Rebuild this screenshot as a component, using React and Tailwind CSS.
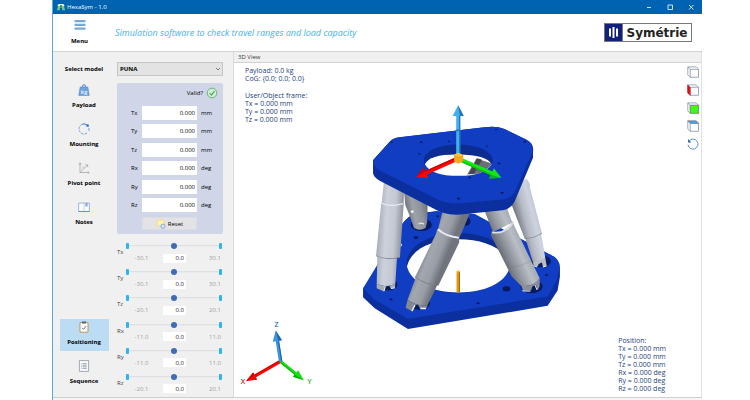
import React, { useState } from 'react';

const FIELDS = [
    { name: 'Tx', unit: 'mm', limit: '30.1' },
    { name: 'Ty', unit: 'mm', limit: '30.1' },
    { name: 'Tz', unit: 'mm', limit: '20.1' },
    { name: 'Rx', unit: 'deg', limit: '11.0' },
    { name: 'Ry', unit: 'deg', limit: '11.0' },
    { name: 'Rz', unit: 'deg', limit: '20.1' },
];

function WeightIcon() {
    return (
        <svg viewBox="0 0 12 12" className="h-3 w-3">
            <circle cx="6" cy="2.2" r="1.5" fill="none" stroke="#5583bd" />
            <path d="M2.2 3h7.6l1.4 8.4H.8z" fill="#6fa3dc" stroke="#5583bd" strokeWidth=".6" />
            <text x="6" y="9.6" fontSize="5.5" textAnchor="middle" fill="#d9ecff" fontFamily="Open Sans, sans-serif">kg</text>
        </svg>
    );
}

function MountingIcon() {
    return (
        <svg viewBox="0 0 12 12" className="h-3 w-3" fill="none" stroke="#5f8fce">
            <path d="M10.6 4A5 5 0 1 0 9 10" strokeDasharray="2.6 1" strokeWidth=".8" />
            <path d="M4 1.2a5 5 0 0 1 5 .8" />
            <path d="M8.3 1.3h2.4v2.4H8.3z" fill="#3f74c0" stroke="none" />
            <path d="M11 5v3" strokeWidth=".8" />
        </svg>
    );
}

function PivotIcon() {
    return (
        <svg viewBox="0 0 12 12" className="h-3 w-3" fill="none" stroke="#a3a7ad" strokeWidth=".8">
            <path d="M2 1v9.5h9M2 10.5 9.5 3" />
            <path d="M.8 2.5 2 .8l1.2 1.7M7.3 2.8h2.4v2.4M9.7 9.3l1.5 1.2-1.5 1.2" />
            <path d="M4.4 6.2 6 4.6" stroke="#7fa3d4" />
        </svg>
    );
}

function NotesIcon() {
    return (
        <svg viewBox="0 0 12 12" className="h-3 w-3">
            <path d="M.6 2h10.8v8.5H.6z" fill="#f6f9fd" stroke="#8ba9d2" strokeWidth=".8" />
            <path d="M7.5 2h2v4l-1-.9-1 .9z" fill="#7f9fcc" />
            <path d="M6 2v8.5" stroke="#a9bddb" strokeWidth=".6" />
            <path d="M.6 10.5h10.8" stroke="#6c8fc4" />
        </svg>
    );
}

function ClipboardIcon() {
    return (
        <svg viewBox="0 0 12 12" className="h-3 w-3">
            <path d="M2 1.6h8v9.6H2z" fill="#fff" stroke="#b78a4c" strokeWidth=".9" />
            <path d="M4 .5h4v2H4z" fill="#58626e" />
            <path d="m4 6.8 1.5 1.6L8.2 5" fill="none" stroke="#5a6672" strokeWidth=".9" />
        </svg>
    );
}

function SequenceIcon() {
    return (
        <svg viewBox="0 0 12 12" className="h-3 w-3">
            <path d="M1.4.6h9.2v10.8H1.4z" fill="#fbfbfc" stroke="#8b95a3" strokeWidth=".8" />
            <path d="M4.6 3.6h4M4.6 5.2h4M4.6 6.8h4M4.6 8.4h4" stroke="#8d9bb0" strokeWidth=".9" />
            <path d="M3 3.6h.9M3 5.2h.9M3 6.8h.9M3 8.4h.9" stroke="#a8b4c6" strokeWidth=".9" />
        </svg>
    );
}

function CubeIcon({ face }) {
    return (
        <svg viewBox="0 0 12 12" className="h-3 w-3" stroke="#74859f" strokeWidth=".7" strokeLinejoin="round">
            <path d="M.8.9h8.4l2.3 2.4v8H3.2L.8 8.9z" fill="#fff" />
            {face === 'left' && <path d="M.8.9 3.2 3.3v8L.8 8.9z" fill="#f00" stroke="#d00" />}
            {face === 'front' && <path d="M3.2 3.3h8.3v8H3.2z" fill="#3dff00" />}
            {face === 'top' && <path d="M.8.9h8.4l2.3 2.4H3.2z" fill="#3fa9f0" />}
            <path d="M3.2 3.3h8.3M3.2 3.3v8M.8.9l2.4 2.4" fill="none" />
        </svg>
    );
}

function RotateIcon() {
    return (
        <svg viewBox="0 0 12 12" className="h-3 w-3" fill="none" stroke="#4f82c4" strokeWidth=".9">
            <path d="M2.3 2.7A5 5 0 1 1 1 6.8" />
            <path d="M1 1v3.4h3.4z" fill="#2f66b0" stroke="none" />
        </svg>
    );
}

const TOP_ITEMS = [
    { label: 'Payload', Icon: WeightIcon },
    { label: 'Mounting', Icon: MountingIcon },
    { label: 'Pivot point', Icon: PivotIcon },
    { label: 'Notes', Icon: NotesIcon },
];

const BOTTOM_ITEMS = [
    { label: 'Positioning', Icon: ClipboardIcon, active: true },
    { label: 'Sequence', Icon: SequenceIcon },
];

function NavItem({ label, Icon, active }) {
    return (
        <button
            className={`flex w-[49px] flex-col items-center gap-1 pt-[2px] pb-1 text-[6px] leading-[10px] font-bold whitespace-nowrap ${active ? 'bg-[#bcdcf4]' : ''}`}
        >
            <Icon />
            <span>{label}</span>
        </button>
    );
}

function TitleBar() {
    return (
        <div className="flex h-[14px] items-center bg-[#0063b1] pl-1 text-white">
            <svg viewBox="0 0 8 8" className="h-2 w-2">
                <path d="M1.5 1h5l1.2 2H.3z" fill="#e8f5e4" />
                <path d="M1 3 0 7.2h2.6L3 4.5h2l.4 2.7H8L7 3z" fill="#7fd06c" />
                <path d="M3 2.2h2v1.5H3z" fill="#2c70a8" />
            </svg>
            <span className="ml-[2px] text-[6px] leading-[10px]">HexaSym - 1.0</span>
            <div className="ml-auto flex gap-[11px] pr-[6px]">
                <button aria-label="Minimize" className="h-[10px] w-[10px]">
                    <svg viewBox="0 0 10 10" stroke="#fff" strokeWidth=".8"><path d="M3 5.5h4" /></svg>
                </button>
                <button aria-label="Maximize" className="h-[10px] w-[10px]">
                    <svg viewBox="0 0 10 10" fill="none" stroke="#fff" strokeWidth=".8"><path d="M3 3h4.5v4.5H3z" /></svg>
                </button>
                <button aria-label="Close" className="h-[10px] w-[10px]">
                    <svg viewBox="0 0 10 10" stroke="#fff" strokeWidth=".8"><path d="m3 3 4.5 4.5M7.5 3 3 7.5" /></svg>
                </button>
            </div>
        </div>
    );
}

function Header() {
    return (
        <header className="flex h-[38px] items-center border-b border-[#d4d4d4] bg-white">
            <button className="flex w-[53px] flex-col items-center gap-[6px] text-[6px] leading-[10px] font-bold">
                <svg viewBox="0 0 12 10" className="h-[10px] w-3" fill="#7ba7d9">
                    <path d="M.5 0h11v2.2H.5zM.5 3.8h11V6H.5zM.5 7.6h11v2.2H.5z" />
                </svg>
                <span>Menu</span>
            </button>
            <p className="ml-[9px] text-[9px] leading-3 whitespace-nowrap text-[#3fb3e6] italic">
                Simulation software to check travel ranges and load capacity
            </p>
            <div className="mr-[10px] ml-auto flex h-[19px] w-[88px] items-stretch border border-[#777] bg-white">
                <div className="w-[17px] bg-[#10207c]">
                    <svg viewBox="0 0 17 17" fill="#fff">
                        <path d="M4 4.5h2v8H4zM7.5 3h2v11h-2zM11 4.5h2v8h-2z" />
                    </svg>
                </div>
                <div className="flex flex-1 items-center justify-center border-l border-[#777] font-['DejaVu_Sans'] text-[12px] leading-4 font-bold text-[#222]">
                    Symétrie
                </div>
            </div>
        </header>
    );
}

function ValuesPanel() {
    return (
        <section className="mt-[7px] h-[151px] rounded-[2px] bg-[#d0d5e8] pt-1 pl-[11px]">
            <div className="flex items-center justify-end gap-[3px] pr-[5px]">
                <span>Valid?</span>
                <svg viewBox="0 0 12 12" className="h-3 w-3" fill="none" stroke="#54a866">
                    <circle cx="6" cy="6" r="4.8" fill="#d2efd2" strokeWidth=".8" />
                    <path d="m3.6 6.2 1.8 1.8 3.2-3.8" strokeWidth="1.2" />
                </svg>
            </div>
            <div className="mt-[7px] grid h-[106px] content-between">
                {FIELDS.map((f) => (
                    <label key={f.name} className="grid grid-cols-[14px_55px_1fr] items-center">
                        <span className="pl-[3px]">{f.name}</span>
                        <input defaultValue="0.000" className="h-[14px] min-w-0 bg-white px-[2px] text-right" />
                        <span className="pl-1">{f.unit}</span>
                    </label>
                ))}
            </div>
            <button className="mt-[5px] ml-[14px] flex h-[13px] w-[55px] items-center justify-center gap-[2px] border border-[#dcdde2] bg-[#e3e3e6]">
                <svg viewBox="0 0 10 10" className="h-[10px] w-[10px]">
                    <path d="M1 1h7v6H1z" fill="#fdf3b0" stroke="#e2cf79" strokeWidth=".5" />
                    <circle cx="7" cy="7.2" r="2.1" fill="#dce9f7" stroke="#5d8fcb" strokeWidth=".7" />
                </svg>
                Reset
            </button>
        </section>
    );
}

function AxisSlider({ name, limit }) {
    const [value, setValue] = useState(0);
    return (
        <div className="grid h-6 grid-cols-[9px_minmax(0,1fr)] items-center text-[#444]">
            <span>{name}</span>
            <div>
                <div className="flex h-[10px] items-center pr-[1px]">
                    <span className="h-[6px] w-[3px] rounded-[1px] bg-[#2fb4f2]" />
                    <input
                        type="range"
                        aria-label={name}
                        min={-Number(limit)}
                        max={limit}
                        step="0.1"
                        value={value}
                        onChange={(e) => setValue(Number(e.target.value))}
                        className="h-[6px] min-w-0 flex-1 appearance-none bg-linear-to-b from-transparent from-35% via-[#d9dbde] via-35% to-transparent to-65% [&::-webkit-slider-thumb]:h-[6px] [&::-webkit-slider-thumb]:w-[6px] [&::-webkit-slider-thumb]:appearance-none [&::-webkit-slider-thumb]:rounded-full [&::-webkit-slider-thumb]:bg-[#3f6cb5]"
                    />
                    <span className="h-[6px] w-[3px] rounded-[1px] bg-[#2fb4f2]" />
                </div>
                <div className="mt-[2px] grid grid-cols-3 items-center text-[#a0a0a0]">
                    <span className="pr-[10px] text-right whitespace-nowrap">-{limit}</span>
                    <input
                        aria-label={`${name} value`}
                        value={value.toFixed(1)}
                        onChange={(e) => setValue(Number(e.target.value) || 0)}
                        className="mx-auto h-[9px] w-[23px] bg-white pr-[2px] text-right text-[#222]"
                    />
                    <span className="pr-[2px] text-right">{limit}</span>
                </div>
            </div>
        </div>
    );
}

function Sidebar() {
    return (
        <aside className="flex w-[181px] shrink-0 border-r border-[#dcdcdc] bg-[#f0f0f0]">
            <nav className="flex w-16 shrink-0 flex-col items-center gap-[7px] pt-[10px] pr-[2px] pb-[7px]">
                <label htmlFor="model" className="mb-[-1px] text-[6px] leading-[14px] font-bold whitespace-nowrap">Select model</label>
                {TOP_ITEMS.map((item) => <NavItem key={item.label} {...item} />)}
                <div className="mt-auto flex flex-col gap-[7px]">
                    {BOTTOM_ITEMS.map((item) => <NavItem key={item.label} {...item} />)}
                </div>
            </nav>
            <div className="flex min-w-0 flex-1 flex-col pt-[10px] pr-[10px] text-[6px] leading-[10px]">
                <div className="relative">
                    <select id="model" className="block h-[14px] w-full appearance-none border border-[#c6c6c6] bg-[#e3e3e3] pl-[2px] font-bold">
                        <option>PUNA</option>
                    </select>
                    <svg viewBox="0 0 6 6" className="pointer-events-none absolute top-1 right-[2px] h-[6px] w-[6px]" fill="none" stroke="#555" strokeWidth=".7">
                        <path d="m1 2 2 2 2-2" />
                    </svg>
                </div>
                <ValuesPanel />
                <div className="mt-[6px] mb-[2px] flex flex-1 flex-col justify-between">
                    {FIELDS.map((f) => <AxisSlider key={f.name} {...f} />)}
                </div>
            </div>
        </aside>
    );
}

function Arrow({ x, y, angle, length, color, dark, width = 10 }) {
    return (
        <g transform={`translate(${x} ${y}) rotate(${angle})`}>
            <path d={`M0 ${-width / 2}H${length - 28}v${width}H0z`} fill={color} />
            <path d={`M0 ${width / 5}H${length - 28}v${width / 3}H0z`} fill={dark} />
            <path d={`M${length - 32} ${-width * 1.4} ${length} 0l${-32} ${width * 1.4}z`} fill={color} />
            <path d={`M${length - 32} ${width * 0.4} ${length} 0l${-32} ${width * 1.4}z`} fill={dark} />
        </g>
    );
}

const LEG_SHADES = {
    legA: { line: [66, 420, 142, 424], stops: ['#a3a8b2', '#ccd2dc', '#c3c8d2', '#8f939d'] },
    legB: { line: [152, 356, 218, 343], stops: ['#6c7078', '#9da1a9', '#8f939b', '#6b6f77'] },
    legC: { line: [200, 486, 270, 514], stops: ['#787c84', '#a3a7af', '#999da5', '#70747c'] },
    legD: { line: [445, 506, 515, 474], stops: ['#6b6f77', '#9599a2', '#b9bdc6', '#a5a9b2'] },
    legE: { line: [492, 409, 562, 391], stops: ['#777b84', '#b4b9c4', '#ced4df', '#bcc1cc'] },
};

function Hexapod() {
    return (
        <svg viewBox="234 63 468 334" className="h-full w-full" role="img" aria-label="Hexapod">
            <defs>
                {Object.entries(LEG_SHADES).map(([id, { line, stops }]) => (
                    <linearGradient key={id} id={id} gradientUnits="userSpaceOnUse" x1={line[0]} y1={line[1]} x2={line[2]} y2={line[3]}>
                        <stop offset="0" stopColor={stops[0]} />
                        <stop offset=".35" stopColor={stops[1]} />
                        <stop offset=".7" stopColor={stops[2]} />
                        <stop offset="1" stopColor={stops[3]} />
                    </linearGradient>
                ))}
            </defs>

            {/* drawn at three times the screen size */}
            <g transform="translate(355 90) scale(.3333)">
                {/* base plate */}
                <path d="M25 595 60 565 135 415Q150 385 180 372L245 364 360 372 585 493Q618 506 617 536V560L610 602 580 648 160 718 60 655 25 622z" fill="#0b2f9f" />
                <path d="M25 595 135 415Q150 385 180 372L245 364 360 372 585 493Q618 506 615 536L606 575 580 620 160 687 60 630z" fill="#113dc2" />
                <ellipse cx="312" cy="519" rx="156" ry="90" fill="#0b2c90" />
                <path d="M157 530C170 475 235 448 312 448S455 475 467 530C455 580 390 608 312 608S170 580 157 530z" fill="#fff" />
                <g fill="#071b63">
                    <ellipse cx="100" cy="584" rx="28" ry="18" />
                    <ellipse cx="194" cy="640" rx="32" ry="20" />
                    <ellipse cx="200" cy="404" rx="32" ry="19" />
                    <ellipse cx="532" cy="590" rx="33" ry="20" />
                    <ellipse cx="560" cy="514" rx="30" ry="18" />
                    <ellipse cx="333" cy="394" rx="15" ry="13" />
                    <ellipse cx="456" cy="597" rx="12" ry="8" />
                    <ellipse cx="184" cy="443" rx="7" ry="4" />
                    <ellipse cx="249" cy="379" rx="4" ry="3" />
                    <ellipse cx="109" cy="629" rx="5" ry="3" />
                    <ellipse cx="371" cy="640" rx="5" ry="3" />
                    <ellipse cx="577" cy="555" rx="5" ry="3" />
                </g>
                <path d="M306 545h10v63h-10z" fill="#e39a12" />
                <path d="M313 545h3v63h-3z" fill="#9c6205" />
                <ellipse cx="311" cy="545" rx="5" ry="3" fill="#f7bb2b" />

                {/* legs behind */}
                <path d="M147 290H213L219 345 218 395 213 414Q195 424 178 414L168 385 152 345z" fill="url(#legB)" />
                <circle cx="173" cy="365" r="4" fill="#f4f5f8" />
                <path d="M192 402Q201 396 208 403" fill="none" stroke="#e6e8ed" strokeWidth="4" />
                <path d="M138 460l3 5-3 5" fill="none" stroke="#e8eaf0" strokeWidth="3" />
                <path d="M472 330 512 442 536 518Q555 522 573 504L560 430z" fill="url(#legE)" />
                <path d="M478 290 515 266Q528 276 527 293L563 430Q538 447 511 446L468 335z" fill="url(#legE)" />
                <path d="M511 446Q538 447 563 430" fill="none" stroke="#7c808a" strokeWidth="2" />
                <path d="M536 518 573 504 577 528 566 532 563 518 553 522 550 530 538 526z" fill="#b9bdc7" />
                <path d="M537 527 548 531M567 531 576 528" fill="none" stroke="#f1f2f5" strokeWidth="3" />

                {/* front legs */}
                <path d="M89 265H149L147 345H80z" fill="url(#legA)" />
                <path d="M84 335Q110 347 142 335L147 345 136 502Q100 512 64 498L79 345z" fill="url(#legA)" />
                <path d="M81 340Q110 352 145 341" fill="none" stroke="#e3e7ee" strokeWidth="4" />
                <path d="M68 500Q100 510 127 504L122 582Q95 596 66 582z" fill="url(#legA)" />
                <path d="M64 498Q100 512 136 502" fill="none" stroke="#7f838d" strokeWidth="2" />
                <path d="M66 582Q95 596 122 582L121 594 108 596 104 587 92 588 88 605 66 595z" fill="#a9adb7" />
                <path d="M88 604 92 590M109 596 121 594" fill="none" stroke="#f6f6f8" strokeWidth="3" />

                <path d="M265 360H350L313 448 250 420z" fill="url(#legC)" />
                <path d="M248 418Q278 445 314 443V458L252 586Q212 585 181 562L244 432z" fill="url(#legC)" />
                <path d="M250 418Q276 441 313 443" fill="none" stroke="#e9ebf0" strokeWidth="6" />
                <path d="M183 564Q212 584 248 586L219 646Q185 650 159 630z" fill="url(#legC)" />
                <path d="M181 562Q215 586 252 586" fill="none" stroke="#5c6069" strokeWidth="2" />
                <path d="M159 630Q185 650 219 646L215 656 196 655 190 645 180 646 172 664 153 654z" fill="#858992" />
                <path d="M172 664 181 646M197 656 214 656" fill="none" stroke="#f2f2f5" strokeWidth="4" />

                <path d="M387 355H458L474 398 416 426z" fill="url(#legD)" />
                <path d="M412 424Q450 434 475 394L480 408 556 565Q540 592 500 588L472 560 409 435z" fill="url(#legD)" />
                <path d="M413 427Q452 434 475 399" fill="none" stroke="#dde1e8" strokeWidth="5" />
                <path d="M462 535Q500 530 532 512" fill="none" stroke="#777b84" strokeWidth="1" />
                <path d="M500 586Q540 592 556 565V590L549 602 545 584 534 590 530 602 506 602z" fill="#8b8f98" />
                <path d="M504 603 528 604M542 585 548 600" fill="none" stroke="#f4f4f6" strokeWidth="3" />

                {/* top plate with its bore */}
                <path d="M55 210 105 155Q115 143 135 141L390 111Q425 106 450 116L515 148Q540 160 536 185V203L480 336Q470 355 445 361L325 373Q285 378 250 362L75 272Q55 260 55 248z" fill="#0b2f9f" />
                <path d="M55 210 105 155Q115 143 135 141L390 111Q425 106 450 116L515 148Q540 160 534 187L480 308Q470 325 445 328L325 339Q285 343 250 328L75 241Q55 230 55 210z" fill="#113dc2" />
                <ellipse cx="311" cy="210" rx="104" ry="47" fill="#0b2c90" />
                <path d="M211 222Q225 192 311 193T411 222Q392 257 311 257T211 222z" fill="#fff" />
                <path d="M338 253 366 205 412 220Q400 242 370 251z" fill="#6a6e77" />
                <path d="M343 252 368 204 383 209 358 251z" fill="#44474e" />
                <g fill="#071b63">
                    <ellipse cx="112" cy="156" rx="4" ry="2" />
                    <ellipse cx="200" cy="156" rx="4" ry="3" />
                    <ellipse cx="283" cy="154" rx="3" ry="2" />
                    <ellipse cx="194" cy="191" rx="4" ry="2" />
                    <ellipse cx="397" cy="168" rx="3" ry="2" />
                    <ellipse cx="425" cy="118" rx="4" ry="2" />
                    <ellipse cx="511" cy="155" rx="4" ry="3" />
                    <ellipse cx="434" cy="220" rx="4" ry="3" />
                    <ellipse cx="346" cy="262" rx="4" ry="3" />
                    <ellipse cx="443" cy="308" rx="5" ry="3" />
                    <ellipse cx="312" cy="325" rx="5" ry="3" />
                </g>

                <Arrow x={311} y={205} angle={-90} length={160} color="#3fb0f2" dark="#2876b4" width={12} />
                <Arrow x={311} y={205} angle={156} length={138} color="#fb0606" dark="#d00000" width={12} />
                <Arrow x={311} y={205} angle={24} length={142} color="#14e814" dark="#09b909" width={12} />
                <path d="M305 118h12v5h-12z" fill="#2774b3" />
                <path d="M298 194 311 188 326 195 326 213 312 221 299 214z" fill="#f6a81c" />
                <path d="M298 194 312 200 326 195 311 188z" fill="#ffc33d" />
            </g>

            {/* world axes, bottom left */}
            <g transform="translate(232 310) scale(.3333)">
                <Arrow x={146} y={155} angle={150} length={120} color="#fb0606" dark="#d50000" width={9} />
                <Arrow x={146} y={155} angle={39} length={90} color="#12e012" dark="#08b308" width={9} />
                <Arrow x={146} y={155} angle={-99} length={94} color="#3a95dd" dark="#1f64a8" width={10} />
            </g>
            <g fontFamily="Open Sans, sans-serif" fontSize="7" textAnchor="middle">
                <text x="276.5" y="327" fill="#2b72b5" stroke="#2b72b5" strokeWidth=".2">Z</text>
                <text x="243" y="384" fill="#d01818" stroke="#d01818" strokeWidth=".2">X</text>
                <text x="309.5" y="384" fill="#18b018" stroke="#18b018" strokeWidth=".2">Y</text>
            </g>
        </svg>
    );
}

function Viewport() {
    return (
        <main className="flex min-w-0 flex-1 flex-col border-r border-[#e2e2e2]">
            <h2 className="h-[11px] border-b border-[#d2d2d2] bg-[#f0f0f0] pl-1 text-[6px] leading-[11px] text-[#333]">3D View</h2>
            <div className="relative flex-1 bg-white text-[7px] leading-[8px] text-[#26427c]">
                <div className="absolute inset-0">
                    <Hexapod />
                </div>
                <div className="absolute top-1 left-[11px]">
                    <p>Payload: 0.0 kg</p>
                    <p>CoG: {'{0.0; 0.0; 0.0}'}</p>
                    <p className="mt-[9px]">User/Object frame:</p>
                    {FIELDS.slice(0, 3).map((f) => <p key={f.name}>{f.name} = 0.000 {f.unit}</p>)}
                </div>
                <div className="absolute right-[35px] bottom-1">
                    <p>Position:</p>
                    {FIELDS.map((f) => <p key={f.name}>{f.name} = 0.000 {f.unit}</p>)}
                </div>
                <div className="absolute top-[3px] right-[2px] flex flex-col gap-[6px]">
                    <button aria-label="Isometric view"><CubeIcon /></button>
                    <button aria-label="Left view"><CubeIcon face="left" /></button>
                    <button aria-label="Front view"><CubeIcon face="front" /></button>
                    <button aria-label="Top view"><CubeIcon face="top" /></button>
                    <button aria-label="Reset view"><RotateIcon /></button>
                </div>
            </div>
        </main>
    );
}

export default function App() {
    return (
        <div className="min-h-screen bg-white pr-12 pl-[52px] font-['Open_Sans','Noto_Sans',sans-serif] text-black">
            <div className="flex min-h-screen flex-col border-l border-[#5aa7dc]">
                <TitleBar />
                <Header />
                <div className="flex flex-1 border-b border-[#cfcfcf]">
                    <Sidebar />
                    <Viewport />
                </div>
                <div className="h-[2px] bg-[#f6f6f6]" />
            </div>
        </div>
    );
}
